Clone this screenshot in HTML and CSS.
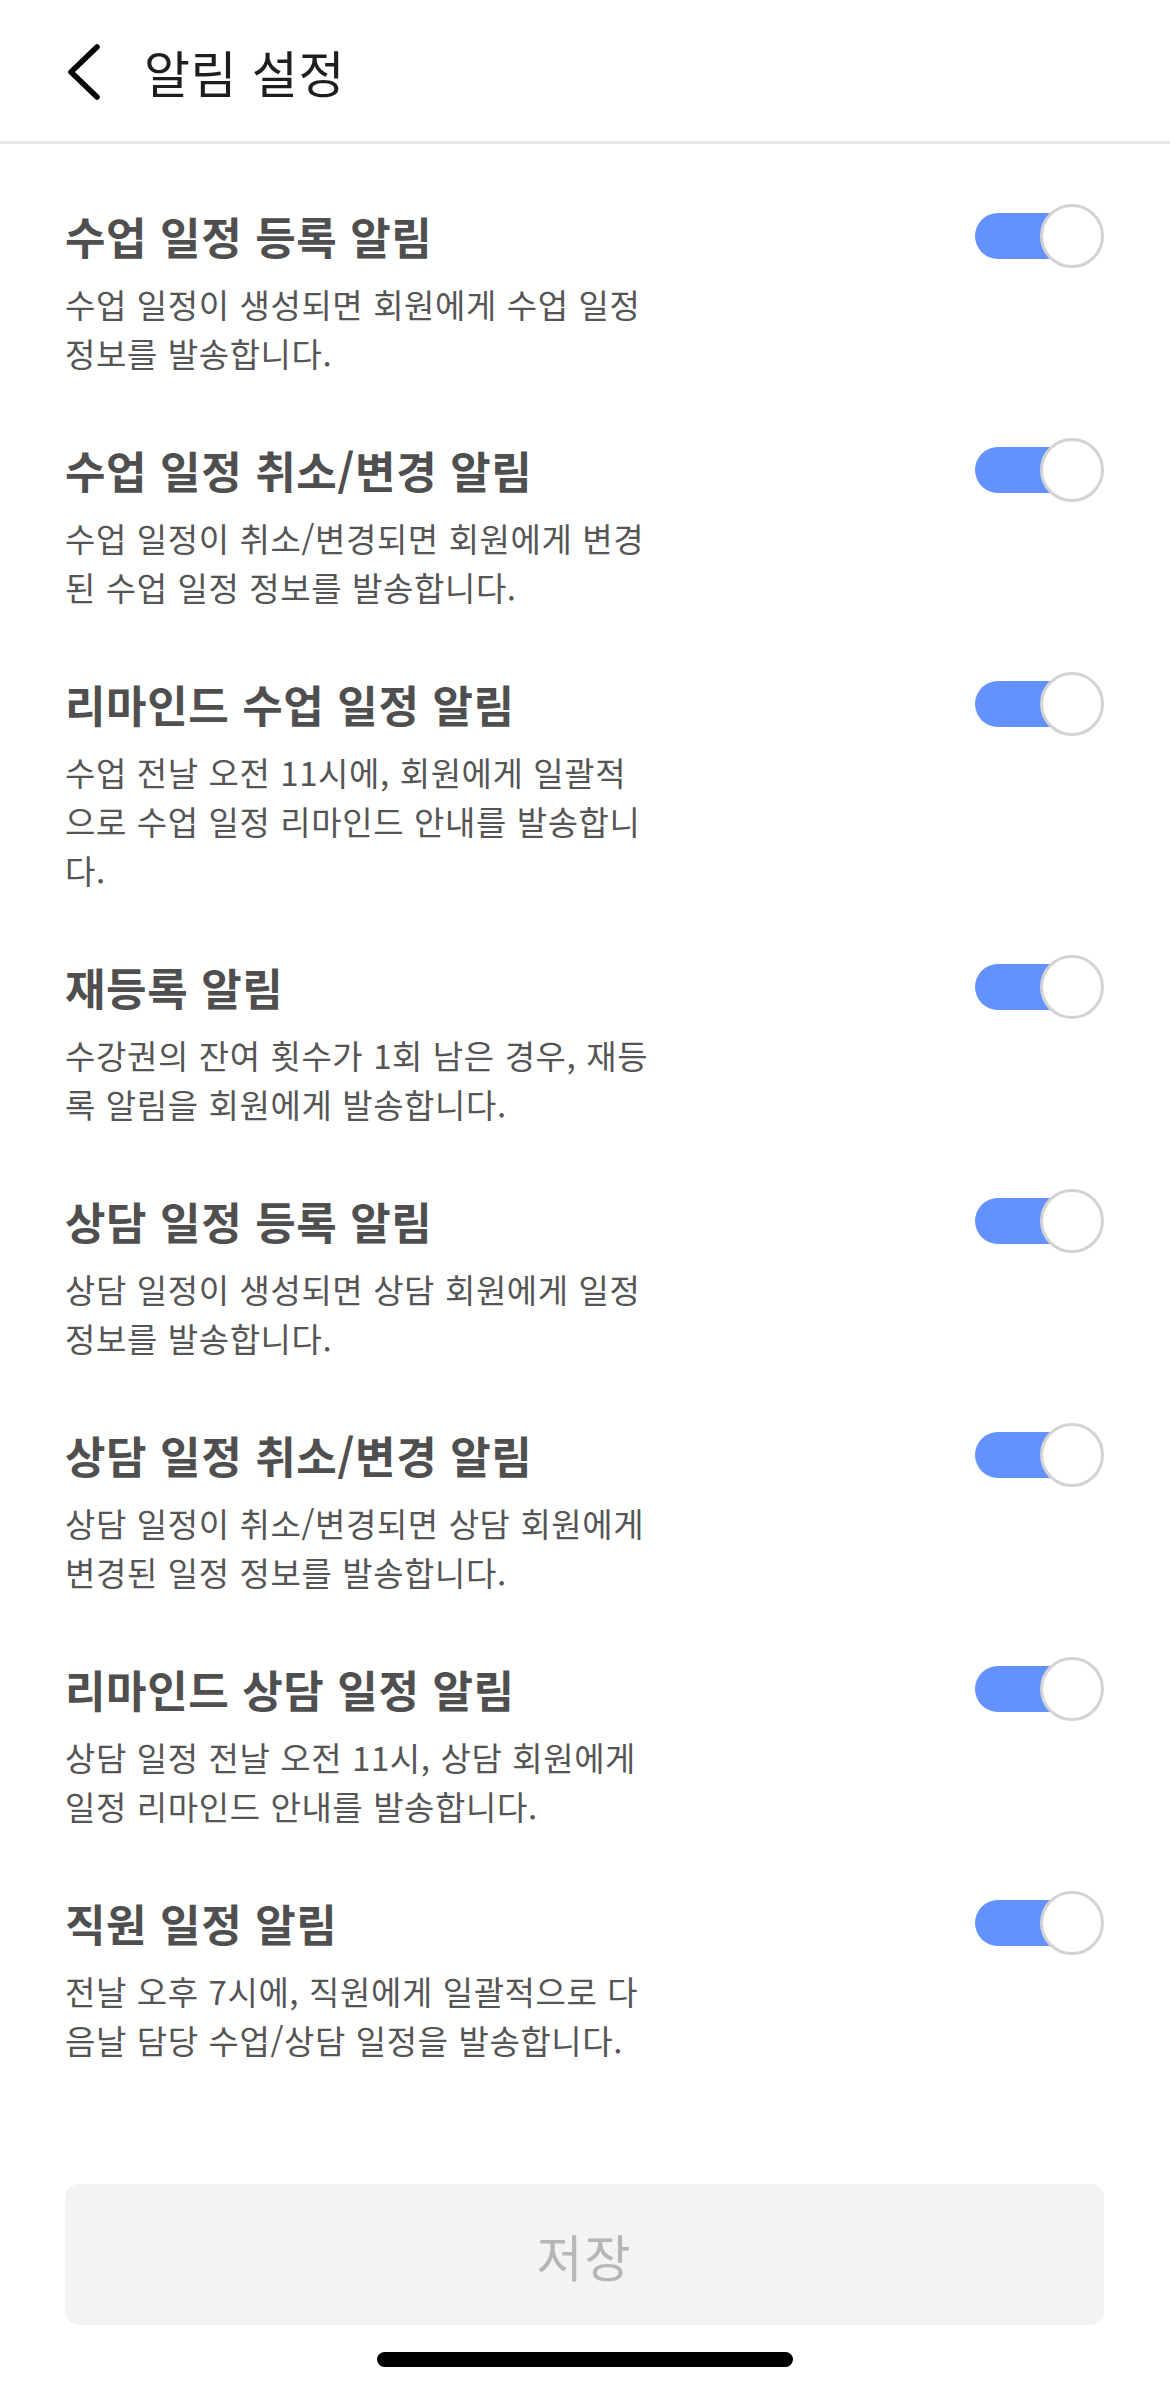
FILE: index.html
```html
<!DOCTYPE html>
<html lang="ko">
<head>
<meta charset="utf-8">
<title>알림 설정</title>
<link rel="stylesheet" href="styles.css">
</head>
<body>
<div class="screen">
  <header class="header">
    <svg class="back" width="40" height="64" viewBox="0 0 40 64" aria-hidden="true">
      <path d="M31 8 L5 33 L31 58" fill="none" stroke="#000" stroke-width="5.5" stroke-linecap="round" stroke-linejoin="round"/>
    </svg>
    <h1 class="header-title">알림 설정</h1>
  </header>

  <main class="list">
    <div class="item">
      <div class="text">
        <div class="title">수업 일정 등록 알림</div>
        <p class="desc">수업 일정이 생성되면 회원에게 수업 일정<br>정보를 발송합니다.</p>
      </div>
      <div class="toggle"><span class="track"></span><span class="knob"></span></div>
    </div>
    <div class="item">
      <div class="text">
        <div class="title">수업 일정 취소/변경 알림</div>
        <p class="desc">수업 일정이 취소/변경되면 회원에게 변경<br>된 수업 일정 정보를 발송합니다.</p>
      </div>
      <div class="toggle"><span class="track"></span><span class="knob"></span></div>
    </div>
    <div class="item">
      <div class="text">
        <div class="title">리마인드 수업 일정 알림</div>
        <p class="desc">수업 전날 오전 11시에, 회원에게 일괄적<br>으로 수업 일정 리마인드 안내를 발송합니<br>다.</p>
      </div>
      <div class="toggle"><span class="track"></span><span class="knob"></span></div>
    </div>
    <div class="item">
      <div class="text">
        <div class="title">재등록 알림</div>
        <p class="desc">수강권의 잔여 횟수가 1회 남은 경우, 재등<br>록 알림을 회원에게 발송합니다.</p>
      </div>
      <div class="toggle"><span class="track"></span><span class="knob"></span></div>
    </div>
    <div class="item">
      <div class="text">
        <div class="title">상담 일정 등록 알림</div>
        <p class="desc">상담 일정이 생성되면 상담 회원에게 일정<br>정보를 발송합니다.</p>
      </div>
      <div class="toggle"><span class="track"></span><span class="knob"></span></div>
    </div>
    <div class="item">
      <div class="text">
        <div class="title">상담 일정 취소/변경 알림</div>
        <p class="desc">상담 일정이 취소/변경되면 상담 회원에게<br>변경된 일정 정보를 발송합니다.</p>
      </div>
      <div class="toggle"><span class="track"></span><span class="knob"></span></div>
    </div>
    <div class="item">
      <div class="text">
        <div class="title">리마인드 상담 일정 알림</div>
        <p class="desc">상담 일정 전날 오전 11시, 상담 회원에게<br>일정 리마인드 안내를 발송합니다.</p>
      </div>
      <div class="toggle"><span class="track"></span><span class="knob"></span></div>
    </div>
    <div class="item">
      <div class="text">
        <div class="title">직원 일정 알림</div>
        <p class="desc">전날 오후 7시에, 직원에게 일괄적으로 다<br>음날 담당 수업/상담 일정을 발송합니다.</p>
      </div>
      <div class="toggle"><span class="track"></span><span class="knob"></span></div>
    </div>
  </main>

  <footer class="footer">
    <button class="save" type="button">저장</button>
    <div class="home-indicator"></div>
  </footer>
</div>
</body>
</html>
```

FILE: styles.css
```css
* {
  box-sizing: border-box;
}

html, body {
  margin: 0;
  padding: 0;
  background: #fff;
}

body {
  font-family: "Noto Sans CJK KR", "Noto Sans", sans-serif;
  color: #333;
}

.screen {
  width: 1170px;
  min-height: 2391px;
  display: flex;
  flex-direction: column;
}

.header {
  height: 144px;
  border-bottom: 3px solid #e7e7e7;
  display: flex;
  align-items: center;
  padding-left: 66px;
  gap: 38px;
}

.back {
  display: block;
  flex: none;
}

.header-title {
  margin: 0;
  font-size: 50px;
  font-weight: 400;
  letter-spacing: 0.6px;
  color: #1e1e1e;
  line-height: 1;
}

.list {
  padding: 63px 66px 0 65px;
  display: flex;
  flex-direction: column;
  gap: 63px;
}

.item {
  display: flex;
  align-items: flex-start;
  justify-content: space-between;
}

.text {
  flex: 1;
  min-width: 0;
}

.title {
  font-size: 44px;
  font-weight: 700;
  letter-spacing: 0.6px;
  line-height: 58px;
  color: #4f4f4f;
}

.desc {
  margin: 15px 0 0;
  font-size: 33px;
  font-weight: 400;
  letter-spacing: 0.6px;
  line-height: 49px;
  color: #555;
}

.toggle {
  position: relative;
  flex: none;
  width: 129px;
  height: 64px;
  margin-top: -3px;
}

.track {
  position: absolute;
  left: 0;
  top: 9px;
  width: 112px;
  height: 46px;
  border-radius: 23px;
  background: #6391fe;
}

.knob {
  position: absolute;
  right: 0;
  top: 0;
  width: 64px;
  height: 64px;
  border-radius: 50%;
  background: #fff;
  border: 3px solid #d3d3d3;
}

.footer {
  margin-top: auto;
  padding: 0 66px 24px 65px;
  display: flex;
  flex-direction: column;
  align-items: center;
}

.save {
  width: 100%;
  height: 141px;
  border: none;
  border-radius: 14px;
  background: #f3f3f3;
  color: #b6b6b6;
  font-family: "Noto Sans CJK KR", "Noto Sans", sans-serif;
  font-size: 50px;
  font-weight: 400;
  letter-spacing: 2px;
  padding: 0;
}

.home-indicator {
  margin-top: 27px;
  width: 416px;
  height: 15px;
  border-radius: 8px;
  background: #000;
}
```
